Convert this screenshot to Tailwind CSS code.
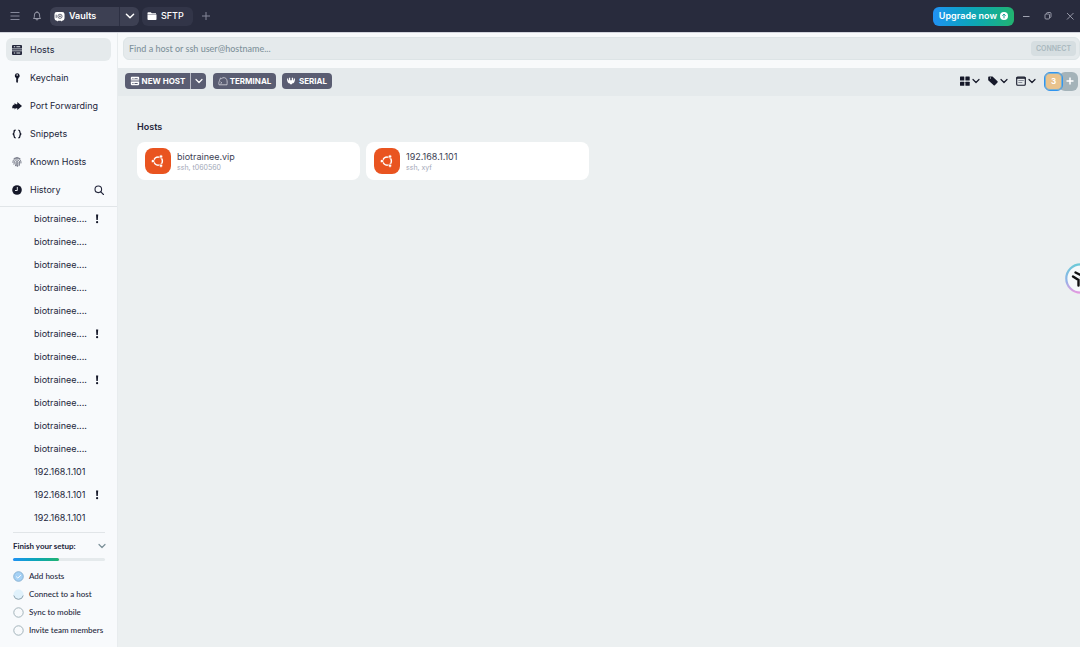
<!DOCTYPE html>
<html lang="en">
<head>
    <meta charset="UTF-8">
    <meta name="viewport" content="width=device-width, initial-scale=1.0">
    <title>Vaults - Hosts</title>
    <script src="https://cdn.jsdelivr.net/npm/@tailwindcss/browser@4"></script>
</head>
<body class="h-screen flex flex-col overflow-hidden bg-[#ecf0f1] font-['Inter','Noto_Sans',sans-serif] text-[#23263b] text-[9px] leading-3">

    <!-- Shared icons -->
    <svg class="hidden">
        <symbol id="chevron" viewBox="0 0 10 10"><path d="M2 3.5l3 3 3-3" fill="none" stroke="currentColor" stroke-width="1.2" stroke-linecap="round" stroke-linejoin="round"/></symbol>
        <symbol id="server" viewBox="0 0 12 12">
            <path fill="currentColor" fill-rule="evenodd" d="M2 1h8a1 1 0 0 1 1 1v2.6H1V2a1 1 0 0 1 1-1zm.8 1.3v1h1.4v-1zm2.6 0v1h3.8v-1zM1 5.3h10v1.2H1zM1 7.3h10V10a1 1 0 0 1-1 1H2a1 1 0 0 1-1-1zm1.8 1.2v1.1h1.4V8.5zm2.6 0v1.1h3.8V8.5z"/>
        </symbol>
        <symbol id="ubuntu" viewBox="0 0 26 26">
            <circle cx="13.200" cy="13.100" r="4.200" fill="none" stroke="#fff" stroke-width="1.500"/>
            <g fill="#fff" stroke="#e95420" stroke-width=".7">
                <circle cx="7.900" cy="13.100" r="1.700"/>
                <circle cx="16" cy="8.500" r="1.700"/>
                <circle cx="16" cy="17.700" r="1.700"/>
            </g>
        </symbol>
    </svg>

    <!-- Title bar -->
    <header class="h-8 shrink-0 flex items-center bg-[#282b3d] text-white pl-[9px] pr-1">
        <button aria-label="Menu" class="text-[#85889a]">
            <svg class="size-3" viewBox="0 0 12 12"><path d="M1.500 2.500h9M1.500 6h9M1.500 9.500h9" stroke="currentColor" stroke-width="1"/></svg>
        </button>
        <button aria-label="Notifications" class="ml-2.5 text-[#a0a3b1]">
            <svg class="size-3" viewBox="0 0 12 12" fill="none" stroke="currentColor" stroke-width=".9" stroke-linejoin="round"><path d="M2.500 8.500c1-1 .9-2 .9-3.500a2.600 2.800 0 0 1 5.200 0c0 1.500 0 2.500.9 3.500zM4.800 8.700c.2 1.800 2.200 1.800 2.400 0M6 1.200v1"/></svg>
        </button>
        <div class="ml-[7px] h-[19px] flex rounded-md bg-[#3d4053] font-semibold">
            <button class="w-[69px] flex items-center gap-1 pl-1">
                <svg class="size-[11px]" viewBox="0 0 12 12"><path fill="#fff" d="M3 1h6a2.500 2.500 0 0 1 2.500 2.500v4.500A2.500 2.500 0 0 1 9 10.500l-.5 1-1-1h-3l-1 1-.5-1A2.500 2.500 0 0 1 .5 8V3.500A2.500 2.500 0 0 1 3 1z"/><circle cx="6.500" cy="5.800" r="2.300" fill="none" stroke="#3d4053" stroke-width=".8"/><circle cx="6.500" cy="5.800" r=".9" fill="#3d4053"/><path d="M2.400 4v3.500" stroke="#3d4053" stroke-width=".8"/></svg>
                Vaults
            </button>
            <button aria-label="Vault list" class="w-5 grid place-items-center border-l border-[#2d3043]"><svg class="size-3"><use href="#chevron"/></svg></button>
        </div>
        <button class="ml-[3px] h-[19px] w-[51px] flex items-center gap-1 rounded-md bg-[#323548] pl-[5px] font-medium">
            <svg class="size-2.5" viewBox="0 0 10 10" fill="#fff"><path d="M.5 2a.8.8 0 0 1 .8-.8h2.500l1 1.100h4.200v.9H.5z"/><path d="M.5 3.500h9v4.700a.8.8 0 0 1-.8.8H1.300a.8.8 0 0 1-.8-.8z"/></svg>
            SFTP
        </button>
        <button aria-label="New tab" class="ml-[7px] text-[#85889a]"><svg class="size-3" viewBox="0 0 12 12"><path d="M6 2v8M2 6h8" stroke="currentColor"/></svg></button>

        <button class="ml-auto h-[19px] flex items-center gap-[3px] rounded-md bg-linear-to-r from-[#2191f3] to-[#22b36f] px-1.5 font-semibold">
            Upgrade now
            <svg class="size-2" viewBox="0 0 8 8"><circle cx="4" cy="4" r="4" fill="#fff"/><path d="M4 6.300V2.200M2.300 3.700L4 2l1.700 1.700" fill="none" stroke="#21a498" stroke-width="1"/></svg>
        </button>
        <div class="flex gap-2.5 ml-1.5 text-[#a0a3b1]">
            <button aria-label="Minimize"><svg class="size-3" viewBox="0 0 12 12"><path d="M3 6.500h6.500" stroke="currentColor"/></svg></button>
            <button aria-label="Restore"><svg class="size-3" viewBox="0 0 12 12" fill="none" stroke="currentColor" stroke-width=".9"><rect x="3" y="4" width="4.500" height="5" rx="1"/><path d="M4.500 4V3.500a1 1 0 0 1 1-1H8a1 1 0 0 1 1 1v3a1 1 0 0 1-1 1h-.5"/></svg></button>
            <button aria-label="Close"><svg class="size-3" viewBox="0 0 12 12"><path d="M3 3l6.500 6.500M9.500 3L3 9.500" stroke="currentColor" stroke-width=".9"/></svg></button>
        </div>
    </header>

    <div class="flex-1 min-h-0 flex border-t border-[#d2d4dc]">
        <!-- Sidebar -->
        <aside class="w-[118px] shrink-0 flex flex-col bg-[#f8fafc] border-r border-[#e8ecee]">
            <nav class="flex flex-col gap-[5px] pt-[5px] pb-[5px] px-1.5 border-b border-[#e1e5e8]">
                <a href="#" class="h-[23px] flex items-center gap-[7px] rounded-md bg-[#e5eaec] pl-[5px]">
                    <svg class="size-3"><use href="#server"/></svg>Hosts
                </a>
                <a href="#" class="h-[23px] flex items-center gap-[7px] pl-[5px]">
                    <svg class="size-3" viewBox="0 0 12 12"><path fill="#151829" fill-rule="evenodd" d="M6.200 1.200a2.600 2.600 0 0 1 1.100 4.900V7l-.6.600.6.700-.6.800.4.700-.9 1.100-1-.9V6.100A2.600 2.600 0 0 1 6.200 1.200zm0 1a.8.8 0 1 0 0 1.600.8.800 0 0 0 0-1.600z"/></svg>Keychain
                </a>
                <a href="#" class="h-[23px] flex items-center gap-[7px] pl-[5px]">
                    <svg class="size-3" viewBox="0 0 12 12"><path fill="#151829" d="M6.300 2L11 6 6.300 10V8.200H4.800L3.600 9.600V8.200H1.200c0-2.500.8-3.400 2.400-3.600V3l1.400 1.300h1.300z"/></svg>Port Forwarding
                </a>
                <a href="#" class="h-[23px] flex items-center gap-[7px] pl-[5px]">
                    <svg class="size-3" viewBox="0 0 12 12"><path fill="none" stroke="#151829" stroke-width="1.300" d="M4.700 2.100c-1.500 0-1.600.4-1.600 1.900 0 1.300-.2 1.800-1.300 2 1.100.2 1.300.7 1.300 2 0 1.500.1 1.900 1.600 1.900M7.300 2.100c1.500 0 1.600.4 1.600 1.900 0 1.300.2 1.800 1.300 2-1.100.2-1.300.7-1.300 2 0 1.500-.1 1.900-1.600 1.900"/></svg>Snippets
                </a>
                <a href="#" class="h-[23px] flex items-center gap-[7px] pl-[5px]">
                    <svg class="size-3" viewBox="0 0 12 12" fill="none" stroke="#5c6070" stroke-width=".8" stroke-linecap="round"><path d="M3 2.400a5 5 0 0 1 6.200.2M1.900 6.500c-.2-3.800 3-4 4.100-4s4.300.4 4 4.500M3 8.300c.4-1 .2-2 .3-2.800.4-2.200 5-2.200 5.300.5.100 1.300 0 2.500-.5 3.800M4.500 9.800c.6-1.500.3-3 .5-4 .4-.9 1.900-.8 2 .5.100 1.500-.1 3-.7 4.300M6 6.500c0 1 0 2-.3 3"/></svg>Known Hosts
                </a>
                <div class="h-[23px] flex items-center pl-[5px] pr-1.5">
                    <a href="#" class="flex items-center gap-[7px]">
                        <svg class="size-3" viewBox="0 0 12 12"><circle cx="6" cy="6" r="4.800" fill="#151829"/><path d="M6.300 3v3.500H4" fill="none" stroke="#f8fafc" stroke-width=".9"/></svg>History
                    </a>
                    <button aria-label="Search history" class="ml-auto"><svg class="size-3" viewBox="0 0 12 12" fill="none" stroke="#23263b" stroke-width="1.100" stroke-linecap="round"><circle cx="5.300" cy="5.300" r="3.300"/><path d="M7.800 7.800l2.700 2.700"/></svg></button>
                </div>
            </nav>

            <ul id="history" class="flex-1 min-h-0 overflow-hidden"></ul>

            <!-- Setup checklist -->
            <section class="ml-[13px] mr-3 pb-2 border-t border-[#e1e5e8] font-['Lato','Noto_Sans',sans-serif] text-[8px]">
                <div class="h-[25px] flex items-center justify-between">
                    <h2 class="font-bold">Finish your setup:</h2>
                    <button aria-label="Collapse" class="-mr-0.5 text-[#7b8f98]"><svg class="size-2.5"><use href="#chevron"/></svg></button>
                </div>
                <div class="h-[3px] rounded-full bg-[#e5eaec]">
                    <div class="h-full w-1/2 rounded-full bg-linear-to-r from-[#2191f3] to-[#22b36f]"></div>
                </div>
                <ul class="pt-1.5 font-medium">
                    <li class="h-[18px] flex items-center gap-[5px]">
                        <svg class="size-[11px]" viewBox="0 0 11 11"><circle cx="5.500" cy="5.500" r="4.800" fill="#a5d1f5" stroke="#86afd0" stroke-width=".9"/><path d="M3.200 5.600l1.600 1.500 3-3" fill="none" stroke="#fff" stroke-width="1"/></svg>Add hosts
                    </li>
                    <li class="h-[18px] flex items-center gap-[5px]">
                        <svg class="size-[11px]" viewBox="0 0 11 11"><circle cx="5.500" cy="5.500" r="5" fill="#e0f1fb"/><path d="M.8 6.500a4.800 4.800 0 0 0 9.400 0" fill="none" stroke="#8399a5" stroke-width=".9"/></svg>Connect to a host
                    </li>
                    <li class="h-[18px] flex items-center gap-[5px]">
                        <svg class="size-[11px]" viewBox="0 0 11 11"><circle cx="5.500" cy="5.500" r="4.700" fill="none" stroke="#9aabb3" stroke-width=".9"/></svg>Sync to mobile
                    </li>
                    <li class="h-[18px] flex items-center gap-[5px] whitespace-nowrap">
                        <svg class="size-[11px] shrink-0" viewBox="0 0 11 11"><circle cx="5.500" cy="5.500" r="4.700" fill="none" stroke="#9aabb3" stroke-width=".9"/></svg>Invite team members
                    </li>
                </ul>
            </section>
        </aside>

        <main class="flex-1 min-w-0 flex flex-col">
            <!-- Search -->
            <div class="bg-[#f8fafb] pl-[5px] pt-1 pb-2">
                <div class="h-[23px] flex items-center rounded-md border border-[#dde4e6] bg-[#e5eaec] pl-[5px] pr-[3px]">
                    <input type="text" aria-label="Find a host" placeholder="Find a host or ssh user@hostname..." class="flex-1 min-w-0 bg-transparent outline-none font-['Lato','Noto_Sans',sans-serif] font-medium placeholder:text-[#7f929b]">
                    <button class="h-[15px] w-[45px] rounded bg-[#d6dee1] text-[7px] leading-none font-semibold text-[#a9b8be]">CONNECT</button>
                </div>
            </div>

            <!-- Toolbar -->
            <div class="h-7 flex items-center bg-[#e5eaec] pl-[7px] pr-0.5 pb-0.5 text-[8px] font-bold text-white">
                <div class="h-4 flex rounded bg-[#5a5d72]">
                    <button class="w-[65px] flex items-center justify-center gap-0.5"><svg class="size-2.5"><use href="#server"/></svg>NEW HOST</button>
                    <button aria-label="More host types" class="w-4 grid place-items-center border-l border-[#b9bbc6]"><svg class="size-2.5"><use href="#chevron"/></svg></button>
                </div>
                <button class="ml-[7px] h-4 w-[63px] flex items-center justify-center gap-0.5 rounded bg-[#5a5d72]">
                    <svg class="size-2.5" viewBox="0 0 10 10" fill="none" stroke="#d5d6de" stroke-width=".8"><path d="M1 8.800c-.6-1.500.1-3 .5-4.300l1-2.500 1.200.5C5 1 8 1.500 8.700 3.500 9.300 5 9.200 7 9 8.800zM2.500 5.800l1.300 1-1.300 1"/></svg>TERMINAL
                </button>
                <button class="ml-1.5 h-4 w-[50px] flex items-center justify-center gap-1 rounded bg-[#5a5d72]">
                    <svg class="size-2" viewBox="0 0 8 8" fill="#fff"><path d="M0 1.500h1.300v1.700H2V.8h1.200v2.400h1.600V.8H6v2.400h.7V1.500H8C8 5 7 6.500 5 6.500v.8H3v-.8C1 6.500 0 5 0 1.500z"/></svg>SERIAL
                </button>

                <div class="ml-auto flex items-center gap-1.5 text-[#151829]">
                    <button aria-label="Layout" class="flex items-center">
                        <svg class="size-3" viewBox="0 0 12 12" fill="currentColor"><rect x="1" y="1.500" width="4.300" height="4" rx=".5"/><rect x="6.400" y="1.500" width="4.300" height="4" rx=".5"/><rect x="1" y="6.700" width="4.300" height="4" rx=".5"/><rect x="6.400" y="6.700" width="4.300" height="4" rx=".5"/></svg>
                        <svg class="size-2.5"><use href="#chevron"/></svg>
                    </button>
                    <button aria-label="Tags" class="flex items-center">
                        <svg class="size-3" viewBox="0 0 12 12"><path fill="currentColor" fill-rule="evenodd" d="M1.200 2.200a.8.8 0 0 1 .8-.8h3.500l5 4.900a.8.8 0 0 1 0 1.100L7.800 10.300a.8.8 0 0 1-1.100 0L1.200 5.200zm1.800.3v1h1v-1z"/></svg>
                        <svg class="size-2.5"><use href="#chevron"/></svg>
                    </button>
                    <button aria-label="Sort" class="flex items-center">
                        <svg class="size-3" viewBox="0 0 12 12"><rect x="1.700" y="2" width="8.600" height="8.300" rx="1" fill="none" stroke="currentColor" stroke-width="1.100"/><path d="M1.500 3h9" stroke="currentColor" stroke-width="1.500"/><path d="M3.300 5.500h5.500M3.300 7.500h4" stroke="#7c8290" stroke-width=".9"/></svg>
                        <svg class="size-2.5"><use href="#chevron"/></svg>
                    </button>
                </div>
                <div class="ml-[7px] flex items-center">
                    <button class="relative z-10 size-[19px] rounded-md border border-[#2f95f0] bg-[#e9c38d] leading-none text-white ring-1 ring-inset ring-[#7db1cf]">3</button>
                    <button aria-label="Add member" class="-ml-1 size-[19px] rounded-md bg-[#a4b3b9] grid place-items-center pl-0.5"><svg class="size-2" viewBox="0 0 8 8"><path d="M4 .5v7M.5 4h7" stroke="#fff" stroke-width="1.500"/></svg></button>
                </div>
            </div>

            <!-- Host cards -->
            <section class="pl-[19px] pr-[33px] pt-[25px]">
                <h1 class="font-semibold">Hosts</h1>
                <div class="grid grid-cols-4 gap-1.5 pt-[9px]">
                    <a href="#" class="h-[38px] flex items-center gap-1.5 rounded-lg bg-white pl-2">
                        <svg class="size-[26px] rounded-lg bg-[#e95420]"><use href="#ubuntu"/></svg>
                        <span class="flex flex-col text-[#3b3e53]">biotrainee.vip<span class="text-[7px] leading-[9px] text-[#a3a8b7]">ssh, t060560</span></span>
                    </a>
                    <a href="#" class="h-[38px] flex items-center gap-1.5 rounded-lg bg-white pl-2">
                        <svg class="size-[26px] rounded-lg bg-[#e95420]"><use href="#ubuntu"/></svg>
                        <span class="flex flex-col text-[#3b3e53]">192.168.1.101<span class="text-[7px] leading-[9px] text-[#a3a8b7]">ssh, xyf</span></span>
                    </a>
                </div>
            </section>
        </main>
    </div>

    <!-- Floating assistant button, partly off the right edge -->
    <button aria-label="Assistant" class="fixed top-[263px] -right-4">
        <svg class="size-[31px]" viewBox="0 0 31 31">
            <defs><linearGradient id="ring" x1="0" y1="0" x2="0" y2="1"><stop offset="0" stop-color="#6cc9d8"/><stop offset=".55" stop-color="#8db4e8"/><stop offset="1" stop-color="#e39ae0"/></linearGradient></defs>
            <circle cx="15.500" cy="15.500" r="14.200" fill="#f6f9fa" stroke="url(#ring)" stroke-width="2.200"/>
            <path d="M10.500 9.500l6 3M8 13.500l5.500 3.500v5.500M20 12l-4 3" fill="none" stroke="#111" stroke-width="2.400" stroke-linecap="round"/>
        </svg>
    </button>

    <script>
        const sessions = [
            ['biotrainee....', true], ['biotrainee....'], ['biotrainee....'], ['biotrainee....'], ['biotrainee....'],
            ['biotrainee....', true], ['biotrainee....'], ['biotrainee....', true], ['biotrainee....'], ['biotrainee....'], ['biotrainee....'],
            ['192.168.1.101'], ['192.168.1.101', true], ['192.168.1.101']
        ];
        const warning = '<svg class="size-2.5 shrink-0" viewBox="0 0 10 10" fill="#151829"><path d="M4 .5h2.200L5.800 6H4.400z"/><circle cx="5.100" cy="8.200" r="1.100"/></svg>';

        document.getElementById('history').innerHTML = sessions.map(([name, failed]) =>
            `<li class="h-[23px] flex items-center justify-between pl-[34px] pr-[15px]">${name}${failed ? warning : ''}</li>`
        ).join('');
    </script>
</body>
</html>
